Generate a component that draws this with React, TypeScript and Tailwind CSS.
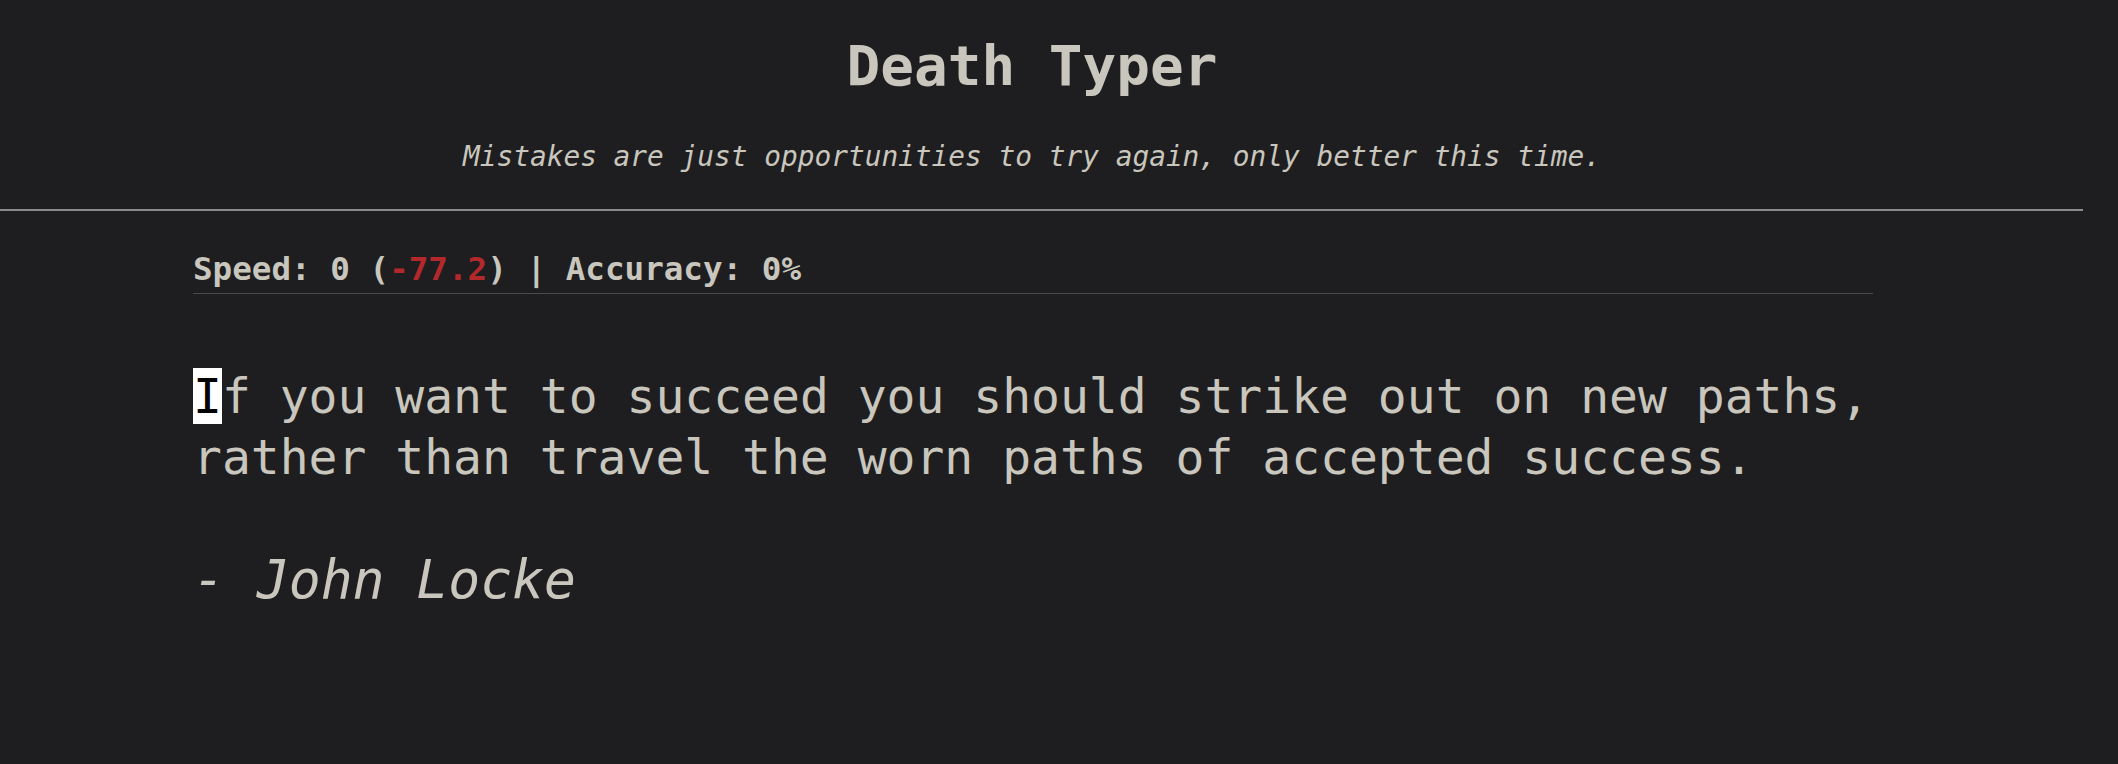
import React from 'react';

const mono = "font-['DejaVu_Sans_Mono','Liberation_Mono',monospace]";

export default function App() {
  return (
    <div className={`min-h-screen w-full bg-[#1e1e20] text-[#c9c6bd] ${mono}`}>
      {/* header */}
      <header className="w-[2064px] text-center">
        <h1 className="pt-[33px] text-[56px] font-bold leading-[65px]">Death Typer</h1>
        <p className="mt-[42px] text-[27.8px] italic leading-[33px]">
          Mistakes are just opportunities to try again, only better this time.
        </p>
      </header>

      <div className="mt-[36px] h-[2px] w-[2083px] bg-[#8a8a8a]"></div>

      <main className="ml-[193px] w-[1680px]">
        {/* stats */}
        <div className="mt-[40px] border-b border-[#4a4a4a] pb-[5px] text-[32.6px] font-bold leading-[37px]">
          Speed: 0 (<span className="text-[#b3292b]">-77.2</span>) | Accuracy: 0%
        </div>

        {/* quote */}
        <p className="mt-[72px] text-[48px] leading-[61px] whitespace-nowrap">
          <span className="bg-white text-black">I</span>f you want to succeed you should strike out on new paths,
          <br />
          rather than travel the worn paths of accepted success.
        </p>

        <p className="mt-[61px] text-[53px] italic leading-[62px]">- John Locke</p>
      </main>
    </div>
  );
}
